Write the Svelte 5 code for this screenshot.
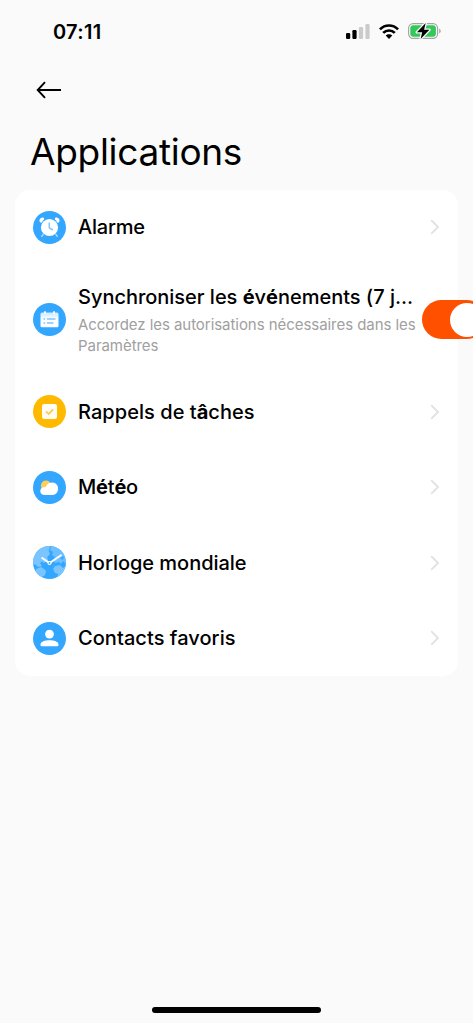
<script>
    let synced = true;

    const items = [
        { id: "alarm", label: "Alarme", spacing: -0.22 },
        {
            id: "calendar",
            label: "Synchroniser les événements (7 j...",
            hint: "Accordez les autorisations nécessaires dans les Paramètres",
            spacing: -0.02,
        },
        { id: "tasks", label: "Rappels de tâches", spacing: 0.05 },
        { id: "weather", label: "Météo", spacing: -0.2 },
        { id: "world", label: "Horloge mondiale", spacing: -0.03 },
        { id: "contacts", label: "Contacts favoris", spacing: 0.06 },
    ];

    // accented letters are drawn in a heavier weight than the rest of the label
    const split = (text) => text.split(/([éâ])/).filter(Boolean);
</script>

<div class="screen">
    <header class="status">
        <span class="time">07:11</span>
        <div class="indicators">
            <svg width="24" height="16" viewBox="0 0 24 16">
                <rect x="0" y="10" width="4.2" height="6" rx="1.2" />
                <rect x="6.4" y="7" width="4.2" height="9" rx="1.2" />
                <rect x="12.9" y="4" width="4.2" height="12" rx="1.2" fill="#cbcbcb" />
                <rect x="19.4" y="1" width="4.2" height="15" rx="1.2" fill="#cbcbcb" />
            </svg>
            <svg class="wifi" width="20" height="15" viewBox="0 0 20 15">
                <g fill="none" stroke="#000" stroke-width="2.7">
                    <path d="M0.9 5.4C6 .2 14 .2 19.1 5.4" />
                    <path d="M4.2 8.9C7.4 5.7 12.6 5.7 15.8 8.9" />
                </g>
                <path d="M6.7 11.5C8.5 9.7 11.5 9.7 13.3 11.5L10 14.9Z" />
            </svg>
            <svg class="battery" width="34" height="18" viewBox="0 0 34 18">
                <rect x=".6" y="1.6" width="29" height="14.8" rx="4.6" fill="none" stroke="#a3a3a3" stroke-width="1.1" />
                <path d="M31.2 6.7C33.2 7.4 33.2 10.6 31.2 11.3Z" fill="#a3a3a3" />
                <rect x="2.3" y="3.2" width="25.6" height="11.6" rx="3" fill="#34c759" />
                <path d="M17.7 1.1L8.9 10.2H14.2L12.6 16.9L21.4 7.8H16.1Z" stroke="#fafafa" stroke-width="2.6" stroke-linejoin="round" />
                <path d="M17.7 1.1L8.9 10.2H14.2L12.6 16.9L21.4 7.8H16.1Z" />
            </svg>
        </div>
    </header>

    <nav>
        <button type="button" class="back" aria-label="Retour">
            <svg width="26" height="18" viewBox="0 0 26 18" fill="none" stroke="#000" stroke-width="1.9">
                <path d="M9 1.2L1.7 9L9 16.8M1.7 9H25" />
            </svg>
        </button>
    </nav>

    <h1>Applications</h1>

    <main class="card">
        {#each items as item}
            <div class="row" class:tall={item.hint}>
                <svg class="icon" width="33" height="33" viewBox="0 0 33 33">
                    <circle cx="16.5" cy="16.5" r="16.5" fill={item.id === "tasks" ? "#ffba00" : "#33a6ff"} />
                    {#if item.id === "alarm"}
                        <g stroke="#fff" fill="none" stroke-linecap="round">
                            <path d="M10.5 23L8.8 25.3M22.5 23L24.2 25.3" stroke="#b8dfff" stroke-width="1.4" />
                            <path d="M8.2 10.2Q7.2 8.5 9.7 8.1M24.8 10.2Q25.8 8.5 23.3 8.1" stroke-width="3" />
                        </g>
                        <circle cx="16.5" cy="16.5" r="9.2" fill="#33a6ff" />
                        <circle cx="16.5" cy="16.5" r="8.6" fill="#fff" />
                        <path d="M16.3 11.4V16.9L19.8 19" fill="none" stroke="#7fc5ff" stroke-width="1.5" />
                    {:else if item.id === "calendar"}
                        <defs>
                            <linearGradient id="page" x2="0" y2="1">
                                <stop offset="0" stop-color="#c9e8ff" />
                                <stop offset=".45" stop-color="#fff" />
                            </linearGradient>
                        </defs>
                        <rect x="7.5" y="9.5" width="18" height="14.8" rx="1.5" fill="url(#page)" />
                        <path d="M12 8.3V11M21 8.3V11" stroke="#fff" stroke-width="1.7" />
                        <path d="M10.5 16H12.2M14 16H22.5M10.5 20H12.2M14 20H20.5" stroke="#7fc5ff" stroke-width="1.3" />
                    {:else if item.id === "tasks"}
                        <rect x="9" y="9" width="15" height="15" rx="2.2" fill="#fffdf5" />
                        <path d="M13 16.4L15.7 19L20.1 14.3" fill="none" stroke="#ffc94a" stroke-width="1.7" />
                    {:else if item.id === "weather"}
                        <circle cx="13" cy="14.6" r="5.1" fill="#ffcf55" />
                        <path
                            d="M12.1 24.1C5.7 24.1 6 16.2 11 16.2C12.3 16.2 12.8 15.8 13.3 15C14.8 12.4 16.8 11.6 19.3 11.6C27 11.6 27.2 24.1 19.3 24.1Z"
                            fill="#fff"
                        />
                    {:else if item.id === "world"}
                        <clipPath id="globe"><circle cx="16.5" cy="16.5" r="16.5" /></clipPath>
                        <g fill="#7ac4ff" clip-path="url(#globe)">
                            <path d="M0 0H17L15.7 5L17 8L14.2 11L15 14L11 17L9 15.5L7 17L9 20L5 21L3 19L0 18Z" />
                            <path d="M18 0H33V18L30 15L28 18L26 16L22 17L20 14L22 11L19 9L20 6L17 4Z" opacity=".82" />
                            <path d="M3 23L8 21L11 23L13 25L12 29L9 31L3 29Z" />
                            <path d="M22 20L27 19L30 22L33 20V31L24 33L25 28L22 27L20 23Z" />
                            <path d="M27 12L31 10L30 14Z" fill="#33a6ff" />
                        </g>
                        <path d="M9.2 12L16.5 17L28 9.2" fill="none" stroke="#fff" stroke-width="1.9" stroke-linecap="round" />
                        <circle cx="16.5" cy="17" r="1.5" fill="#33a6ff" stroke="#fff" stroke-width="1.2" />
                    {:else}
                        <circle cx="16.5" cy="12.1" r="4.4" fill="#fff" />
                        <path d="M7.5 22.4C7.5 16.8 25.5 16.8 25.5 22.4V23.1Q25.5 24.3 24.3 24.3H8.7Q7.5 24.3 7.5 23.1Z" fill="#fff" />
                    {/if}
                </svg>

                <div class="text">
                    <span class="label" style="letter-spacing: {item.spacing}px">
                        {#each split(item.label) as part}{#if /[éâ]/.test(part)}<b>{part}</b>{:else}{part}{/if}{/each}
                    </span>
                    {#if item.hint}
                        <span class="hint">{item.hint}</span>
                    {/if}
                </div>

                {#if item.hint}
                    <button
                        type="button"
                        class="toggle"
                        class:on={synced}
                        aria-label={item.label}
                        on:click={() => (synced = !synced)}
                    >
                        <span class="knob"></span>
                    </button>
                {:else}
                    <svg class="chevron" width="10" height="16" viewBox="0 0 10 16" fill="none">
                        <path d="M1.2 1.2L8 8L1.2 14.8" stroke="#e2e2e2" stroke-width="1.9" />
                    </svg>
                {/if}
            </div>
        {/each}
    </main>

    <div class="home"></div>
</div>

<style>
    :global(body) {
        background: #fafafa;
    }

    .screen {
        display: flex;
        flex-direction: column;
        box-sizing: border-box;
        width: 100%;
        height: 1023px;
        overflow: hidden;
        background: #fafafa;
        color: #000;
        font-family: Inter, "Liberation Sans", sans-serif;
    }

    .status {
        display: flex;
        justify-content: space-between;
        align-items: center;
        height: 62px;
        padding: 0 31px 0 53px;
    }

    .time {
        padding-top: 2px;
        font-size: 20px;
        font-weight: 600;
        letter-spacing: 0.3px;
    }

    .indicators {
        display: flex;
        align-items: center;
    }

    .wifi {
        margin-left: 9px;
    }

    .battery {
        margin-left: 9px;
    }

    nav {
        display: flex;
        align-items: center;
        height: 55px;
        padding-left: 36px;
    }

    button {
        border: none;
        padding: 0;
        cursor: pointer;
    }

    .back {
        display: flex;
        background: none;
    }

    h1 {
        height: 72.5px;
        margin: 0;
        padding-left: 30px;
        font-size: 37px;
        font-weight: 400;
        line-height: 70px;
        letter-spacing: -0.3px;
    }

    .card {
        width: 443px;
        margin-left: 15px;
        border-radius: 15px;
        background: #fff;
    }

    .row {
        display: flex;
        align-items: center;
        box-sizing: border-box;
        height: 75.5px;
        padding: 0 18px;
    }

    .row.tall {
        height: 109px;
    }

    .icon {
        flex-shrink: 0;
        margin-right: 12px;
    }

    .text {
        display: flex;
        flex: 1;
        flex-direction: column;
    }

    .tall .text {
        flex: 0 0 344px;
    }

    .label {
        font-size: 20px;
        font-weight: 500;
        line-height: 28px;
        white-space: nowrap;
    }

    .label b {
        font-weight: 700;
    }

    .hint {
        width: 342px;
        margin-top: 3px;
        color: #a0a0a0;
        font-size: 15px;
        line-height: 21px;
        letter-spacing: -0.05px;
    }

    .chevron {
        flex-shrink: 0;
    }

    .toggle {
        display: flex;
        flex: 0 0 64px;
        box-sizing: border-box;
        height: 39px;
        padding: 2.5px;
        border-radius: 20px;
        background: #ddd;
    }

    .toggle.on {
        justify-content: flex-end;
        background: #ff5000;
    }

    .knob {
        width: 34px;
        height: 34px;
        border-radius: 50%;
        background: #fff;
    }

    .home {
        width: 169px;
        height: 6px;
        margin: auto auto 10px 152px;
        border-radius: 3px;
        background: #000;
    }
</style>
